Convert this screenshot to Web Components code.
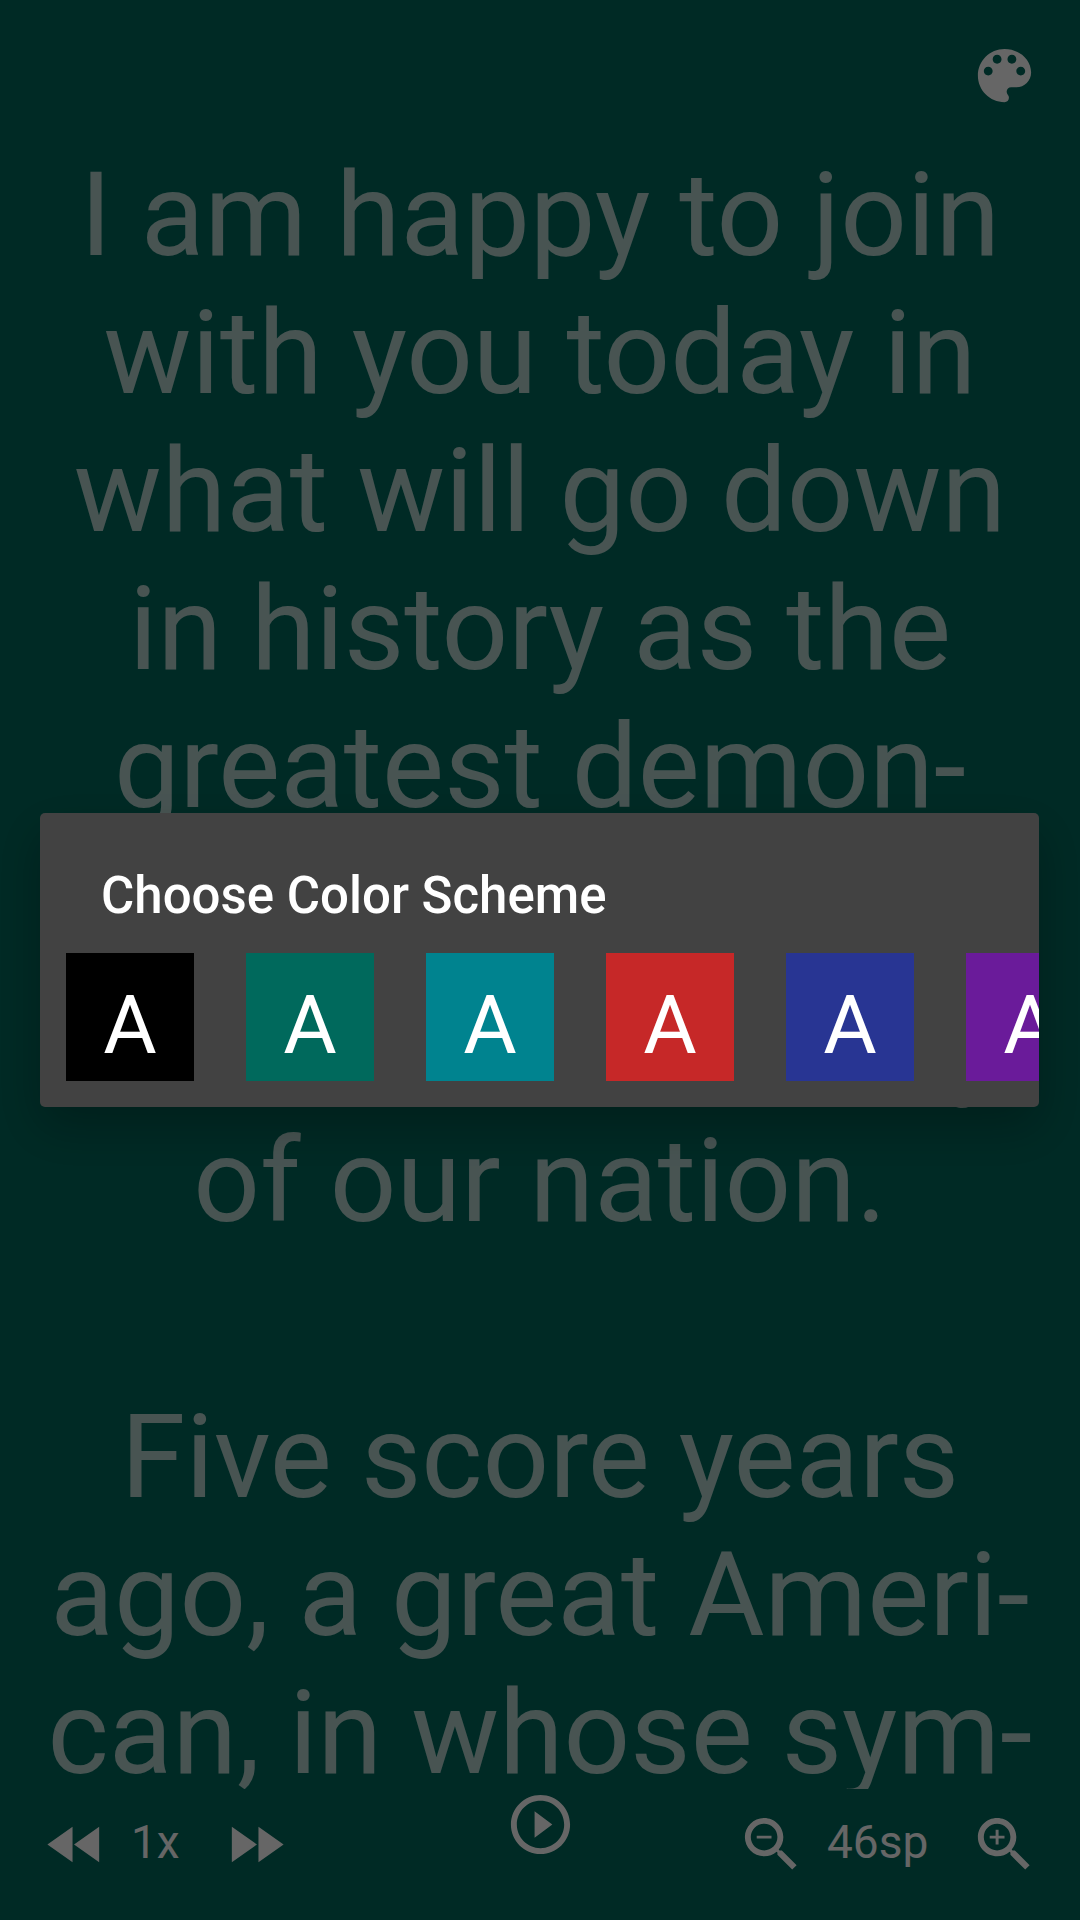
<!DOCTYPE html>
<html lang="en">
<head>
<meta charset="utf-8">
<meta name="viewport" content="width=device-width, initial-scale=1">
<title>Teleprompter</title>
<style>
  body { margin: 0; font-family: Roboto, "Noto Sans", sans-serif; }
</style>
</head>
<body>
<prompter-app>
  <icon-button slot="top" icon="palette" label="Choose color scheme"></icon-button>
  <prompter-text>
    <p>I am happy to join<br>with you today in<br>what will go down<br>in history as the<br>greatest demon-<br>stration for free-<br>dom in the history<br>of our nation.</p>
    <p>Five score years<br>ago, a great Ameri-<br>can, in whose sym-</p>
  </prompter-text>
  <control-bar slot="bottom">
    <value-stepper slot="start" less="rewind" less-label="Slower" more="forward" more-label="Faster" style="--value-width: 69px">1x</value-stepper>
    <icon-button icon="play" label="Play"></icon-button>
    <value-stepper slot="end" less="zoom-out" less-label="Smaller text" more="zoom-in" more-label="Larger text" style="--value-width: 122px">46sp</value-stepper>
  </control-bar>
  <scheme-dialog slot="overlay" heading="Choose Color Scheme">
    <color-swatch color="#000000" name="Black"></color-swatch>
    <color-swatch color="#00695c" name="Teal"></color-swatch>
    <color-swatch color="#00838f" name="Cyan"></color-swatch>
    <color-swatch color="#c62828" name="Red"></color-swatch>
    <color-swatch color="#283593" name="Indigo"></color-swatch>
    <color-swatch color="#6a1b9a" name="Purple"></color-swatch>
  </scheme-dialog>
</prompter-app>

<script>
const ICONS = {
  'palette': 'M12 3c-4.97 0-9 4.03-9 9s4.03 9 9 9c.83 0 1.5-.67 1.5-1.5 0-.39-.15-.74-.39-1.01-.23-.26-.38-.61-.38-.99 0-.83.67-1.5 1.5-1.5H16c2.76 0 5-2.24 5-5 0-4.42-4.03-8-9-8zm-5.5 9c-.83 0-1.5-.67-1.5-1.5S5.67 9 6.5 9 8 9.67 8 10.5 7.33 12 6.5 12zm3-4C8.67 8 8 7.33 8 6.5S8.67 5 9.5 5s1.5.67 1.5 1.5S10.33 8 9.5 8zm5 0c-.83 0-1.5-.67-1.5-1.5S13.67 5 14.5 5s1.5.67 1.5 1.5S15.33 8 14.5 8zm3 4c-.83 0-1.5-.67-1.5-1.5S16.67 9 17.5 9s1.5.67 1.5 1.5-.67 1.5-1.5 1.5z',
  'rewind': 'M11 18V6l-8.5 6 8.5 6zm.5-6l8.5 6V6l-8.5 6z',
  'forward': 'M4 18l8.5-6L4 6v12zm9-12v12l8.5-6L13 6z',
  'play': 'M10 16.5l6-4.5-6-4.5v9zM12 2C6.48 2 2 6.48 2 12s4.48 10 10 10 10-4.48 10-10S17.52 2 12 2zm0 18c-4.41 0-8-3.59-8-8s3.59-8 8-8 8 3.59 8 8-3.59 8-8 8z',
  'zoom-out': 'M15.5 14h-.79l-.28-.27C15.41 12.59 16 11.11 16 9.5 16 5.91 13.09 3 9.5 3S3 5.91 3 9.5 5.91 16 9.5 16c1.61 0 3.09-.59 4.23-1.57l.27.28v.79l5 4.99L20.49 19l-4.99-5zm-6 0C7.01 14 5 11.99 5 9.5S7.01 5 9.5 5 14 7.01 14 9.5 11.99 14 9.5 14zM7 9h5v1H7z',
  'zoom-in': 'M15.5 14h-.79l-.28-.27C15.41 12.59 16 11.11 16 9.5 16 5.91 13.09 3 9.5 3S3 5.91 3 9.5 5.91 16 9.5 16c1.61 0 3.09-.59 4.23-1.57l.27.28v.79l5 4.99L20.49 19l-4.99-5zm-6 0C7.01 14 5 11.99 5 9.5S7.01 5 9.5 5 14 7.01 14 9.5 11.99 14 9.5 14zm2.5-4h-2v2H9v-2H7V9h2V7h1v2h2v1z'
};

function define(name, render) {
  customElements.define(name, class extends HTMLElement {
    constructor() {
      super();
      this.attachShadow({ mode: 'open' });
    }
    connectedCallback() {
      this.shadowRoot.innerHTML = render(this);
    }
  });
}

define('icon-button', el => `
  <style>
    :host { display: block; }
    button { display: block; margin: 0; padding: 0; border: 0; background: none; color: #fff; cursor: pointer; }
    svg { display: block; width: 71px; height: 71px; fill: currentColor; }
  </style>
  <button type="button" aria-label="${el.getAttribute('label')}">
    <svg viewBox="0 0 24 24" aria-hidden="true"><path d="${ICONS[el.getAttribute('icon')]}"/></svg>
  </button>`);

define('prompter-app', () => `
  <style>
    :host { display: flex; flex-direction: column; height: 100vh; background: #00695c; color: #fff; overflow: hidden; }
    header { display: flex; justify-content: flex-end; padding: 40px 40px 35px; }
    main { flex: 1; min-height: 0; overflow: hidden; }
  </style>
  <header><slot name="top"></slot></header>
  <main><slot></slot></main>
  <footer><slot name="bottom"></slot></footer>
  <slot name="overlay"></slot>`);

define('prompter-text', () => `
  <style>
    :host { display: flex; flex-direction: column; gap: 138px; padding: 0 40px; font-size: 117px; line-height: 138px; text-align: center; white-space: nowrap; color: rgba(255, 255, 255, .7); }
    ::slotted(p) { margin: 0; }
  </style>
  <slot></slot>`);

define('control-bar', () => `
  <style>
    :host { display: grid; grid-template-columns: 1fr auto 1fr; align-items: start; padding: 0 40px 40px; }
    .side { display: flex; padding-top: 20px; }
    .end { justify-content: flex-end; }
  </style>
  <div class="side"><slot name="start"></slot></div>
  <slot></slot>
  <div class="side end"><slot name="end"></slot></div>`);

define('value-stepper', el => `
  <style>
    :host { display: flex; align-items: center; gap: 20px; }
    output { width: var(--value-width); padding-bottom: 5px; font-size: 46px; line-height: 54px; }
  </style>
  <icon-button icon="${el.getAttribute('less')}" label="${el.getAttribute('less-label')}"></icon-button>
  <output><slot></slot></output>
  <icon-button icon="${el.getAttribute('more')}" label="${el.getAttribute('more-label')}"></icon-button>`);

define('scheme-dialog', el => `
  <style>
    :host { position: fixed; inset: 0; display: flex; align-items: center; padding: 0 41px 0 40px; background: rgba(0, 0, 0, .6); }
    section { flex: 1; min-width: 0; overflow: hidden; border-radius: 5px; background: #424242; box-shadow: 0 20px 48px rgba(0, 0, 0, .25); }
    h2 { margin: 0; padding: 53px 61px 27px; font-size: 51px; line-height: 60px; font-weight: 500; }
    .row { display: flex; gap: 52px; padding: 0 26px 26px; overflow: hidden; }
  </style>
  <section role="dialog" aria-modal="true" aria-labelledby="heading">
    <h2 id="heading">${el.getAttribute('heading')}</h2>
    <div class="row"><slot></slot></div>
  </section>`);

define('color-swatch', el => `
  <style>
    :host { display: block; flex: none; }
    button { display: block; width: 128px; height: 128px; margin: 0; padding: 24px 0 8px; border: 0; background: ${el.getAttribute('color')}; color: #fff; font: 82px/96px Roboto, "Noto Sans", sans-serif; text-align: center; cursor: pointer; }
  </style>
  <button type="button" title="${el.getAttribute('name')}">A</button>`);
</script>
</body>
</html>
